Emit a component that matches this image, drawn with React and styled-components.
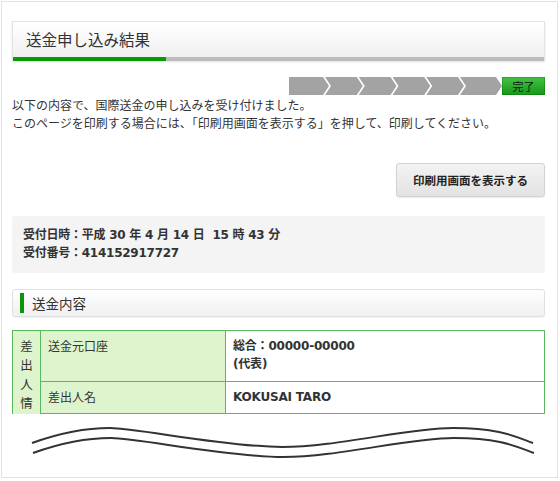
import React from "react";
import styled, { createGlobalStyle } from "styled-components";

const GlobalStyle = createGlobalStyle`
  html, body { margin: 0; padding: 0; background: #fff; }
  body { font-family: "DejaVu Sans", "Noto Sans CJK JP", sans-serif; color: #333; }
  * { box-sizing: border-box; }
`;

const Frame = styled.div`
  width: 557px;
  height: 477px;
  margin: 1px 0 0 1px;
  border: 1px solid #e2e2e2;
  padding: 19px 12px 0 10px;
  overflow: hidden;
`;

const TitlePanel = styled.div`
  border: 1px solid #e4e4e4;
  border-bottom: none;
  box-shadow: 0 1px 2px rgba(0, 0, 0, 0.12);
  background: linear-gradient(#ffffff, #eeeeee);
`;

const TitleText = styled.h1`
  margin: 0;
  height: 35px;
  line-height: 35px;
  padding-left: 13px;
  font-family: "Noto Sans CJK JP", sans-serif;
  font-size: 15.5px;
  font-weight: normal;
  color: #333;
`;

const TitleBar = styled.div`
  height: 4px;
  background: linear-gradient(to right, #089a08 0 153px, #bcbcbc 153px);
`;

const Steps = styled.div`
  display: flex;
  justify-content: flex-end;
  margin-top: 16px;
  height: 18px;
`;

const Step = styled.div`
  width: ${(p) => p.$w}px;
  height: 18px;
  flex: none;
  background: #a3a3a3;
  margin-left: ${(p) => (p.$first ? 0 : -4)}px;
  clip-path: polygon(
    0 0,
    calc(100% - 6px) 0,
    100% 50%,
    calc(100% - 6px) 100%,
    0 100%,
    ${(p) => (p.$first ? "0" : "6px")} 50%
  );
`;

const Done = styled.div`
  width: 43px;
  height: 18px;
  flex: none;
  background: linear-gradient(#43c443, #17961a);
  box-shadow: inset 0 0 0 1px rgba(0, 110, 0, 0.35);
  font-family: "Noto Sans CJK JP", sans-serif;
  font-size: 11px;
  line-height: 18px;
  text-align: center;
  color: #111;
`;

const Intro = styled.p`
  margin: 1px 0 0;
  font-family: "Noto Sans CJK JP", sans-serif;
  font-size: 12px;
  line-height: 18px;
  color: #333;
`;

const ButtonRow = styled.div`
  display: flex;
  justify-content: flex-end;
  margin-top: 31px;
`;

const PrintButton = styled.button`
  width: 149px;
  height: 34px;
  border: 1px solid #d2d2d2;
  border-radius: 3px;
  background: linear-gradient(#f3f3f3, #e3e3e3);
  box-shadow: 0 1px 1px rgba(0, 0, 0, 0.08);
  font-family: "Noto Sans CJK JP", sans-serif;
  font-size: 11.5px;
  font-weight: bold;
  color: #222;
  padding: 0;
`;

const InfoBox = styled.div`
  margin-top: 19px;
  padding: 10px 11px 11px;
  background: #f4f4f4;
  border-radius: 3px;
  font-size: 12px;
  font-weight: bold;
  line-height: 18px;
  letter-spacing: -0.25px;
  color: #333;
`;

const SectionHead = styled.h2`
  margin: 16px 0 0;
  height: 28px;
  display: flex;
  align-items: center;
  gap: 8px;
  padding-left: 7px;
  border: 1px solid #e0e0e0;
  border-radius: 3px;
  background: linear-gradient(#ffffff, #f0f0f0);
  box-shadow: 0 1px 1px rgba(0, 0, 0, 0.06);
  font-family: "Noto Sans CJK JP", sans-serif;
  font-size: 13.5px;
  font-weight: normal;
  color: #333;
`;

const GreenMark = styled.span`
  width: 4px;
  height: 20px;
  background: #0a960a;
`;

const TableClip = styled.div`
  margin-top: 13px;
  height: 84px;
  overflow: hidden;
`;

const Table = styled.table`
  width: 100%;
  border-collapse: collapse;
  table-layout: fixed;
`;

const Cell = styled.td`
  border: 1px solid #5cb85c;
  vertical-align: top;
  padding: ${(p) => (p.$vertical ? "5px 0" : "6px 7px")};
  height: ${(p) => (p.$h ? `${p.$h}px` : "auto")};
  background: ${(p) => (p.$label ? "#ddf4cc" : "#fff")};
  font-family: ${(p) =>
    p.$label ? `"Noto Sans CJK JP", sans-serif` : `"DejaVu Sans", "Noto Sans CJK JP", sans-serif`};
  font-size: 12px;
  font-weight: ${(p) => (p.$label ? "normal" : "bold")};
  letter-spacing: ${(p) => (p.$label ? "0" : "-0.2px")};
  line-height: 18px;
  color: #333;
  text-align: ${(p) => (p.$vertical ? "center" : "left")};
`;

const VerticalText = styled.div`
  width: 13px;
  margin: 0 auto;
  font-size: 12.5px;
  line-height: 19px;
  word-break: break-all;
`;

const Wave = styled.svg`
  display: block;
`;

const wavePath =
  "M20,29 C45,20 72,14 98,14 S215,33 270,33 S395,14 441,14 S502,22 521,29";

export default function App() {
  return (
    <>
      <GlobalStyle />
      <Frame>
        <TitlePanel>
          <TitleText>送金申し込み結果</TitleText>
          <TitleBar />
        </TitlePanel>

        <Steps>
          <Step $first $w={40} />
          <Step $w={37.75} />
          <Step $w={37.75} />
          <Step $w={37.75} />
          <Step $w={37.75} />
          <Step $w={42} />
          <Done>完了</Done>
        </Steps>

        <Intro>
          以下の内容で、国際送金の申し込みを受け付けました。
          <br />
          このページを印刷する場合には、「印刷用画面を表示する」を押して、印刷してください。
        </Intro>

        <ButtonRow>
          <PrintButton type="button">印刷用画面を表示する</PrintButton>
        </ButtonRow>

        <InfoBox>
          <div>受付日時：平成 30 年 4 月 14 日&nbsp; 15 時 43 分</div>
          <div>受付番号：414152917727</div>
        </InfoBox>

        <SectionHead>
          <GreenMark />
          送金内容
        </SectionHead>

        <TableClip>
          <Table>
            <colgroup>
              <col style={{ width: "28px" }} />
              <col style={{ width: "185px" }} />
              <col />
            </colgroup>
            <tbody>
              <tr>
                <Cell $label $vertical rowSpan={3}>
                  <VerticalText>差出人情報</VerticalText>
                </Cell>
                <Cell $label $h={51}>送金元口座</Cell>
                <Cell $h={51}>
                  総合：00000-00000
                  <br />
                  (代表)
                </Cell>
              </tr>
              <tr>
                <Cell $label $h={32}>差出人名</Cell>
                <Cell $h={32}>KOKUSAI TARO</Cell>
              </tr>
              <tr>
                <Cell $label $h={32} />
                <Cell $h={32} />
              </tr>
            </tbody>
          </Table>
        </TableClip>

        <Wave width="533" height="50" viewBox="0 0 533 50">
          <path d={wavePath} fill="none" stroke="#333" strokeWidth="2" />
          <path
            d={wavePath}
            fill="none"
            stroke="#333"
            strokeWidth="2"
            transform="translate(1,10)"
          />
        </Wave>
      </Frame>
    </>
  );
}
